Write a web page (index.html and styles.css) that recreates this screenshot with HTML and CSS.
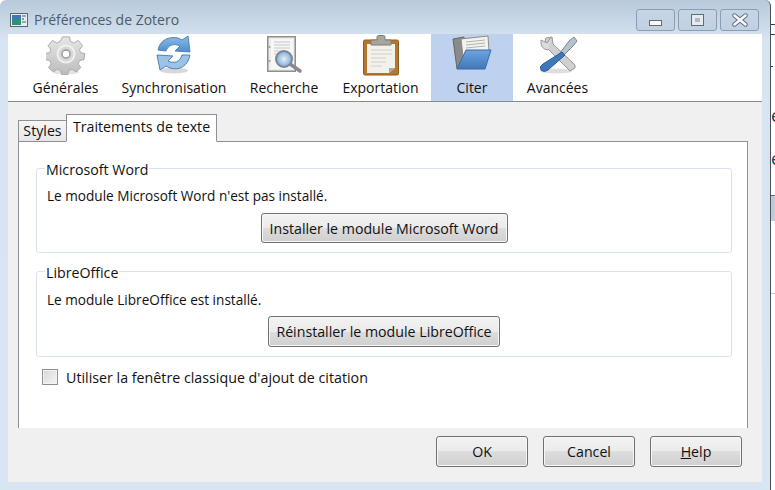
FILE: index.html
```html
<!DOCTYPE html>
<html lang="fr">
<head>
<meta charset="utf-8">
<title>Préférences de Zotero</title>
<link rel="stylesheet" href="styles.css">
</head>
<body>
<div class="window">
  <header class="titlebar">
    <svg class="app-icon" width="18" height="16" viewBox="0 0 18 16">
      <rect x="0.5" y="1.5" width="17" height="13" fill="#e8edf2" stroke="#5d6670"/>
      <rect x="2" y="3" width="9" height="10" fill="#2f8f78"/>
      <rect x="2" y="3" width="9" height="4" fill="#3f78b0"/>
      <rect x="12" y="3" width="4" height="2" fill="#9aa4ae"/>
      <rect x="12" y="6" width="2" height="2" fill="#6fae6a"/>
      <rect x="12" y="9" width="4" height="2" fill="#9aa4ae"/>
    </svg>
    <span class="title">Préférences de Zotero</span>
    <div class="caption-buttons">
      <div class="caption-btn"><span class="glyph-min"></span></div>
      <div class="caption-btn"><span class="glyph-max"></span></div>
      <div class="caption-btn">
        <svg width="16" height="14" viewBox="0 0 16 14"><path d="M2.5 2.5 L13.5 11.5 M13.5 2.5 L2.5 11.5" stroke="#5c6a78" stroke-width="4.4" stroke-linecap="round"/><path d="M2.5 2.5 L13.5 11.5 M13.5 2.5 L2.5 11.5" stroke="#f6f7f8" stroke-width="2.6" stroke-linecap="round"/></svg>
      </div>
    </div>
  </header>
  <div class="client">
    <nav class="toolbar">
      <div class="tool tool-gen">
        <svg class="icon" width="40" height="40" viewBox="0 0 40 40">
          <defs><linearGradient id="g1" x1="0" y1="0" x2="0" y2="1"><stop offset="0" stop-color="#e6e6e6"/><stop offset="1" stop-color="#bcbcbc"/></linearGradient></defs>
          <ellipse cx="20" cy="37" rx="13" ry="2.5" fill="#e2e2e2"/>
          <path d="M16 1h8l1 5 4 2 5-3 5 6-3.500 4.500 1 3.500 5 1v0 0l-1 7-5 1-1.500 4 3 4-5.500 5-4.500-3-4 1.500-1 5h-7l-1-5-4-1.500-4.500 3-5.500-5 3-4-1.500-4-5-1v-7l5-1 1-3.500-3-4.500 5-6 5 3 4-2z" transform="translate(2.500 1) scale(.875)" fill="url(#g1)" stroke="#a3a3a3"/>
          <circle cx="20" cy="19" r="8.500" fill="#d6d6d6" stroke="#f0f0f0" stroke-width="2"/>
          <circle cx="20" cy="19" r="4" fill="#fdfdfd" stroke="#9a9a9a" stroke-width="1.500"/>
        </svg>
        <span>Générales</span>
      </div>
      <div class="tool tool-sync">
        <svg class="icon" width="38" height="40" viewBox="0 0 38 40">
          <defs><linearGradient id="g2" x1="0" y1="0" x2="0" y2="1"><stop offset="0" stop-color="#8fbce8"/><stop offset="1" stop-color="#4f8dca"/></linearGradient></defs>
          <ellipse cx="19" cy="35.500" rx="14" ry="3" fill="#d8d8d8"/>
          <path d="M3 15 C5 5 14 1 23 3 L27 5 L33 1 L35 17 L20 16 L25 11 C19 8 13 10 11 16 Z" fill="url(#g2)" stroke="#4a84bd"/>
          <path d="M35 20 C33 31 24 36 15 33 L11 31 L5 35 L2 20 L18 21 L13 26 C19 29 25 27 27 20 Z" fill="#9cc2e6" stroke="#4a84bd"/>
        </svg>
        <span>Synchronisation</span>
      </div>
      <div class="tool tool-search">
        <svg class="icon" width="40" height="40" viewBox="0 0 40 40">
          <defs><radialGradient id="g3"><stop offset="0" stop-color="#e6f0fa"/><stop offset="1" stop-color="#7fabd6"/></radialGradient></defs>
          <rect x="3" y="1" width="29" height="36" fill="#8e8e8e"/>
          <rect x="4.500" y="2.500" width="26" height="33" fill="#ececec"/>
          <rect x="7" y="4" width="22" height="30" fill="#f7f7f7"/>
          <path d="M10 7h16M10 10h16M10 13h16M10 16h12M10 19h6" stroke="#c6c6c6"/>
          <circle cx="5.500" cy="12" r="1" fill="#999"/><circle cx="5.500" cy="26" r="1" fill="#999"/>
          <path d="M26 29 L36 36" stroke="#8a8a8a" stroke-width="3.500" stroke-linecap="round"/>
          <circle cx="20" cy="24" r="8" fill="url(#g3)" stroke="#7b8794" stroke-width="2"/>
        </svg>
        <span>Recherche</span>
      </div>
      <div class="tool tool-export">
        <svg class="icon" width="38" height="41" viewBox="0 0 38 41">
          <rect x="1.500" y="5" width="35" height="35" rx="1.500" fill="#b4772e" stroke="#8f5c20"/>
          <path d="M5 9h28v24l-6 5H5z" fill="#f3f1ec"/>
          <path d="M27 38l6-5h-6z" fill="#a9a9a4"/>
          <path d="M9 15h21M9 19h21M9 23h15M9 27h15M9 31h11" stroke="#d2d0ca" stroke-width="1.200"/>
          <path d="M9 5h6V2q0-1.500 1.500-1.500h5Q23 .5 23 2v3h6v5H9z" fill="#a8a59c" stroke="#807d74"/>
        </svg>
        <span>Exportation</span>
      </div>
      <div class="tool tool-cite selected">
        <svg class="icon" width="40" height="36" viewBox="0 0 40 36">
          <defs><linearGradient id="g4" x1="0" y1="0" x2="0" y2="1"><stop offset="0" stop-color="#6fa3dc"/><stop offset="1" stop-color="#3f78ba"/></linearGradient></defs>
          <path d="M1 4 L12 2 L13 30 L5 34 Z" fill="#8a8a88" stroke="#66665f"/>
          <path d="M9 4 L36 1 L37 16 L12 30 Z" fill="#f2f2ef" stroke="#8c8c88"/>
          <path d="M14 7l19-2M14 10l19-2M14 13l19-2" stroke="#b2b2ad"/>
          <path d="M14 15 H39 L33 34 H5 Z" fill="url(#g4)" stroke="#3b6ca6"/>
        </svg>
        <span>Citer</span>
      </div>
      <div class="tool tool-adv">
        <svg class="icon" width="40" height="40" viewBox="0 0 40 40">
          <ellipse cx="18" cy="36" rx="16" ry="2.500" fill="#dedede"/>
          <path d="M8 3 L6 10 L9 13 L32 36 L37 33 L37 30 L15 9 L14 2 Z" fill="#d0d0d0" stroke="#989898"/>
          <path d="M13 2 L9 8 L3 5 Q2 14 10 15" fill="#dcdcdc" stroke="#989898"/>
          <path d="M31 6 L36 2 L39 6 L35 11 L25 21 L22 18 Z" fill="#b8c2cc" stroke="#7b8794"/>
          <path d="M24 17 L27 20 L10 35 Q6 38 3 35 Q1 31 5 29 Z" fill="#3f78ba" stroke="#2d5a90"/>
        </svg>
        <span>Avancées</span>
      </div>
    </nav>
    <main class="content">
      <div class="tabs">
        <div class="tab">Styles</div>
        <div class="tab tab-active">Traitements de texte</div>
      </div>
      <section class="tabpanel">
        <fieldset class="group group-word">
          <legend>Microsoft Word</legend>
          <p>Le module Microsoft Word n'est pas installé.</p>
          <div class="group-action"><button class="btn btn-word">Installer le module Microsoft Word</button></div>
        </fieldset>
        <fieldset class="group group-libre">
          <legend>LibreOffice</legend>
          <p>Le module LibreOffice est installé.</p>
          <div class="group-action"><button class="btn btn-libre">Réinstaller le module LibreOffice</button></div>
        </fieldset>
        <label class="check"><span class="checkbox"></span><span class="check-label">Utiliser la fenêtre classique d'ajout de citation</span></label>
      </section>
      <footer class="dialog-buttons">
        <button class="btn btn-dlg">OK</button>
        <button class="btn btn-dlg">Cancel</button>
        <button class="btn btn-dlg"><u>H</u>elp</button>
      </footer>
    </main>
  </div>
</div>
<aside class="behind">
  <i class="mark mark-a"></i>
  <i class="mark mark-b"></i>
  <i class="mark mark-c"></i>
  <span class="behind-e e-a">e</span>
  <span class="behind-e e-b">e</span>
  <div class="band"></div>
  <div class="rule"></div>
</aside>
</body>
</html>
```
FILE: styles.css
```css
* { box-sizing: border-box; }
html, body { margin: 0; height: 490px; overflow: hidden; }
body {
  display: flex;
  background: #fff;
  font-family: "Open Sans", "Noto Sans", sans-serif;
  font-size: 14.2px;
  color: #111;
}
.window {
  width: 771px;
  height: 490px;
  flex: none;
  display: flex;
  flex-direction: column;
  border-right: 1px solid #4b4f55;
  border-top-right-radius: 6px;
  border-top-left-radius: 6px;
  background: linear-gradient(#b7c9da 0, #d7e4f2 40px, #d9e5f2 100%);
  padding: 0 8px 8px 8px;
}
.titlebar {
  height: 34px;
  flex: none;
  display: flex;
  align-items: flex-start;
}
.app-icon { margin: 12px 0 0 2px; }
.title {
  margin: 10px 0 0 6px;
  font-size: 14px;
  color: #4d5c68;
  line-height: 20px;
}
.caption-buttons {
  margin: 9px 3px 0 auto;
  display: flex;
  gap: 3px;
}
.caption-btn {
  width: 39px;
  height: 22px;
  display: flex;
  align-items: center;
  justify-content: center;
  border: 1px solid #8a9db3;
  border-radius: 3px;
  background: linear-gradient(#c6d5e4, #c0d1e2);
}
.glyph-min {
  width: 13px;
  height: 6px;
  margin-top: 6px;
  background: #f8f8f8;
  border: 1px solid #5f6c78;
}
.glyph-max {
  width: 13px;
  height: 12px;
  background: #aeb9c4;
  border: 1px solid #5f6c78;
  box-shadow: inset 0 0 0 3px #e6ebf0;
}
.client {
  flex: 1;
  display: flex;
  flex-direction: column;
  background: #f0f0f0;
  min-height: 0;
}
.toolbar {
  height: 68px;
  flex: none;
  display: flex;
  padding-left: 13px;
  background: #fff;
  border-bottom: 1px solid #8a8a8a;
}
.tool {
  display: flex;
  flex-direction: column;
  align-items: center;
  height: 67px;
  position: relative;
  font-size: 14px;
  white-space: nowrap;
  justify-content: flex-end;
  padding-bottom: 3px;
}
.tool span { line-height: 20px; }
.icon { position: absolute; top: 1px; left: 50%; transform: translateX(-50%); }
.tool-gen { width: 89px; }
.tool-sync { width: 128px; }
.tool-search { width: 92px; }
.tool-export { width: 101px; }
.tool-cite { width: 82px; }
.tool-adv { width: 89px; }
.selected { background: #bed1ee; }
.content {
  flex: 1;
  display: flex;
  flex-direction: column;
  padding: 11px 14px 0 10px;
  min-height: 0;
}
.tabs {
  display: flex;
  align-items: flex-end;
  height: 29px;
  flex: none;
  margin-bottom: -1px;
  position: relative;
  z-index: 1;
}
.tab {
  height: 22px;
  width: 48px;
  text-align: center;
  line-height: 19px;
  border: 1px solid #8f8f98;
  border-right: 0;
  background: linear-gradient(#f6f6f6, #e6e6e6);
}
.tab-active {
  width: 151px;
  height: 28px;
  line-height: 24px;
  border-right: 1px solid #8f8f98;
  border-bottom: 1px solid #fff;
  background: #fff;
}
.tabpanel {
  height: 287px;
  flex: none;
  background: #fff;
  border: 1px solid #8f8f98;
  border-bottom: 0;
  padding: 15px 15px 0 17px;
}
.group {
  margin: 0;
  padding: 0 10px;
  border: 1px solid #d9e2ec;
  border-radius: 3px;
  height: 96px;
}
.group-libre { margin-top: 7px; height: 97px; }
.group legend {
  padding: 4px 1px 0;
  margin-left: -2px;
  line-height: 18px;
}
.group p {
  margin: 0;
  font-size: 13.6px;
  line-height: 20px;
  padding-top: 7px;
  height: 27px;
}
.group-libre p { padding-top: 8px; }
.group-action { display: flex; justify-content: center; padding-top: 7px; }
.btn {
  font: inherit;
  color: #111;
  padding: 0;
  border: 1px solid #707070;
  border-radius: 3px;
  background: linear-gradient(#f2f2f2 0, #ebebeb 50%, #dddddd 50%, #cfcfcf 100%);
  box-shadow: inset 0 0 0 1px #f8f8f8;
}
.btn-word { width: 247px; height: 30px; }
.btn-libre { width: 232px; height: 31px; }
.check {
  display: flex;
  align-items: flex-start;
  margin: 12px 0 0 6px;
  line-height: 18px;
}
.checkbox {
  width: 16px;
  height: 16px;
  margin-right: 8px;
  border: 1px solid #8e8f8f;
  background: linear-gradient(135deg, #d8d8d8, #f4f4f4);
  box-shadow: inset 0 0 0 1px #f4f4f4;
}
.check-label { font-size: 14.25px; }
.dialog-buttons {
  display: flex;
  gap: 15px;
  justify-content: flex-end;
  padding: 8px 6px 0 0;
}
.btn-dlg { width: 92px; height: 31px; }
.behind {
  flex: 1;
  position: relative;
  overflow: hidden;
}
.mark { position: absolute; left: 0; width: 4px; height: 1px; background: #333; }
.mark-a { top: 24px; }
.mark-b { top: 34px; }
.mark-c { top: 66px; width: 2px; }
.behind-e {
  position: absolute;
  left: 0;
  font-size: 18px;
  line-height: 20px;
  color: #1d3a5c;
}
.e-a { top: 105px; }
.e-b { top: 148px; }
.band { position: absolute; left: 0; right: 0; top: 195px; height: 26px; background: #bfcbd8; border-top: 1px solid #666; }
.rule { position: absolute; left: 0; right: 0; top: 293px; height: 1px; background: #c8c8c8; }
```
